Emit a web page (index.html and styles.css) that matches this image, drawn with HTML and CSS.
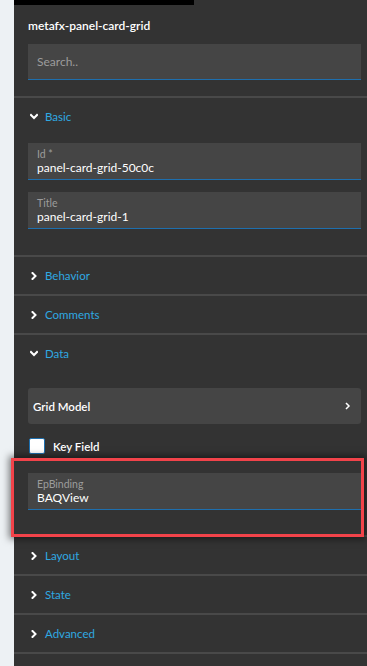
FILE: index.html
```html
<!DOCTYPE html>
<html>
<head>
<meta charset="utf-8">
<link rel="stylesheet" href="styles.css">
</head>
<body>
<div class="gutter"></div>
<div class="panel">
  <div class="topbar"></div>
  <div class="head">
    <div class="title">metafx-panel-card-grid</div>
    <div class="search">Search..</div>
  </div>

  <div class="section">
    <div class="sec-head"><svg class="chev" width="8" height="8" viewBox="0 0 8 8"><polyline points="1,2 4,5 7,2" /></svg><span>Basic</span></div>
    <div class="sec-body basic">
      <div class="field"><div class="label">Id *</div><div class="value">panel-card-grid-50c0c</div></div>
      <div class="field"><div class="label">Title</div><div class="value">panel-card-grid-1</div></div>
    </div>
  </div>

  <div class="section">
    <div class="sec-head"><svg class="chev" width="8" height="8" viewBox="0 0 8 8"><polyline points="2.5,1 5.5,4 2.5,7" /></svg><span>Behavior</span></div>
  </div>
  <div class="section">
    <div class="sec-head"><svg class="chev" width="8" height="8" viewBox="0 0 8 8"><polyline points="2.5,1 5.5,4 2.5,7" /></svg><span>Comments</span></div>
  </div>

  <div class="section">
    <div class="sec-head"><svg class="chev" width="8" height="8" viewBox="0 0 8 8"><polyline points="1,2 4,5 7,2" /></svg><span>Data</span></div>
    <div class="sec-body data">
      <div class="card"><span>Grid Model</span><svg class="small-chev" width="6" height="8" viewBox="0 0 6 8"><polyline points="1.5,1.5 4,4 1.5,6.5" /></svg></div>
      <div class="check-row"><div class="box"></div><span>Key Field</span></div>
      <div class="highlight-wrap">
        <div class="field"><div class="label">EpBinding</div><div class="value">BAQView</div></div>
        <div class="highlight"></div>
      </div>
    </div>
  </div>

  <div class="section">
    <div class="sec-head"><svg class="chev" width="8" height="8" viewBox="0 0 8 8"><polyline points="2.5,1 5.5,4 2.5,7" /></svg><span>Layout</span></div>
  </div>
  <div class="section">
    <div class="sec-head"><svg class="chev" width="8" height="8" viewBox="0 0 8 8"><polyline points="2.5,1 5.5,4 2.5,7" /></svg><span>State</span></div>
  </div>
  <div class="section">
    <div class="sec-head"><svg class="chev" width="8" height="8" viewBox="0 0 8 8"><polyline points="2.5,1 5.5,4 2.5,7" /></svg><span>Advanced</span></div>
  </div>
  <div class="section last"></div>
</div>
</body>
</html>
```
FILE: styles.css
```css
html, body {
  margin: 0;
  padding: 0;
  height: 100%;
  overflow: hidden;
}
body {
  display: flex;
  font-family: Lato, "Noto Sans", sans-serif;
  background: #333333;
}
.gutter {
  width: 14px;
  flex: none;
  background: #edf1f4;
}
.panel {
  flex: 1;
  background: #333333;
  min-height: 666px;
}
.topbar {
  width: 180px;
  height: 5px;
  background: #000;
}
.head {
  padding: 13px 6px 16px 14px;
}
.title {
  color: #fff;
  font-size: 12px;
  font-weight: 600;
  line-height: 16px;
}
.search {
  margin-top: 10px;
  height: 36px;
  box-sizing: border-box;
  background: #454545;
  border-bottom: 1px solid #1e6fae;
  color: #9c9c9c;
  font-size: 12px;
  line-height: 36px;
  padding-left: 9px;
}
.section {
  border-top: 2px solid #494949;
}
.sec-head {
  height: 37px;
  display: flex;
  align-items: center;
  padding-left: 14px;
  color: #2fa9e2;
  font-size: 11.5px;
}
.chev {
  width: 8px;
  height: 8px;
  margin-left: 2px;
  margin-right: 7px;
}
.chev polyline, .small-chev polyline {
  fill: none;
  stroke: #fff;
  stroke-width: 2;
  stroke-linecap: square;
}
.sec-body {
  padding: 0 6px 0 14px;
}
.basic {
  padding-top: 8px;
  padding-bottom: 26px;
  display: flex;
  flex-direction: column;
  gap: 12px;
}
.field {
  height: 37px;
  box-sizing: border-box;
  background: #454545;
  border-bottom: 1px solid #1e6fae;
  padding: 5px 9px 0;
}
.label {
  color: #9c9c9c;
  font-size: 10.5px;
  line-height: 12px;
}
.value {
  color: #fff;
  font-size: 12px;
  line-height: 16px;
}
.data {
  padding-top: 16px;
}
.card {
  height: 36px;
  background: #454545;
  border-radius: 3px;
  display: flex;
  align-items: center;
  justify-content: space-between;
  padding: 0 10px 0 5px;
  color: #fff;
  font-size: 11.5px;
  font-weight: 600;
}
.small-chev {
  width: 6px;
  height: 8px;
}
.small-chev polyline {
  stroke-width: 1.5;
}
.check-row {
  margin-top: 14px;
  display: flex;
  align-items: center;
  gap: 8px;
  height: 16px;
  color: #fff;
  font-size: 11.5px;
  font-weight: 600;
}
.box {
  width: 16px;
  height: 16px;
  margin-left: 1px;
  box-sizing: border-box;
  background: #fff;
  border: 1px solid #1e6fae;
  border-radius: 2px;
}
.highlight-wrap {
  position: relative;
  margin-top: 4px;
  padding: 15px 0 25px;
}
.highlight {
  position: absolute;
  top: 0;
  left: -17px;
  right: -3px;
  bottom: -2px;
  border: 3px solid #f2434a;
  box-shadow: 0 0 7px 2px rgba(0,0,0,0.5);
  pointer-events: none;
  z-index: 1;
}
.last {
  height: 20px;
}
```
